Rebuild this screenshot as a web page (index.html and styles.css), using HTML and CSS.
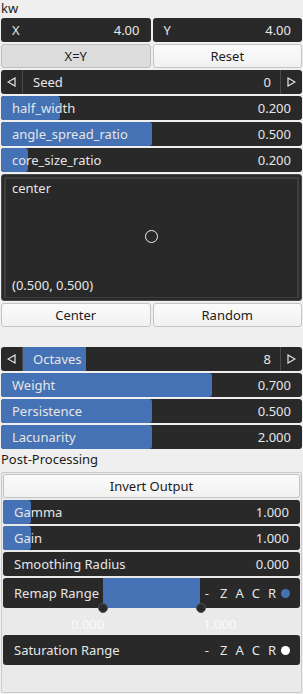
FILE: index.html
```html
<!DOCTYPE html>
<html lang="en">
  <head>
    <meta charset="UTF-8" />
    <meta name="viewport" content="width=device-width, initial-scale=1.0" />
    <title>kw</title>
    <link rel="stylesheet" href="styles.css">
  </head>
  <body>
    <div class="panel">
      <div class="heading heading-top">kw</div>

      <div class="pair">
        <div class="field"><span>X</span><span>4.00</span></div>
        <div class="field"><span>Y</span><span>4.00</span></div>
      </div>
      <div class="pair">
        <button class="btn btn-down">X=Y</button>
        <button class="btn">Reset</button>
      </div>

      <div class="stepper">
        <span class="step">
          <svg width="9" height="10" viewBox="0 0 9 10"><polygon points="8,1 8,9 1,5" /></svg>
        </span>
        <div class="step-body"><span>Seed</span><span>0</span></div>
        <span class="step">
          <svg width="9" height="10" viewBox="0 0 9 10"><polygon points="1,1 1,9 8,5" /></svg>
        </span>
      </div>

      <div class="slider" style="--fill: 19.6%"><span>half_width</span><span>0.200</span></div>
      <div class="slider" style="--fill: 50%"><span>angle_spread_ratio</span><span>0.500</span></div>
      <div class="slider" style="--fill: 9%"><span>core_size_ratio</span><span>0.200</span></div>

      <div class="pad">
        <div class="pad-frame">
          <span class="pad-label">center</span>
          <span class="pad-point"></span>
          <span class="pad-label">(0.500, 0.500)</span>
        </div>
      </div>

      <div class="pair">
        <button class="btn">Center</button>
        <button class="btn">Random</button>
      </div>

      <div class="spacer"></div>

      <div class="stepper">
        <span class="step">
          <svg width="9" height="10" viewBox="0 0 9 10"><polygon points="8,1 8,9 1,5" /></svg>
        </span>
        <div class="step-body step-fill" style="--fill: 24.6%"><span>Octaves</span><span>8</span></div>
        <span class="step">
          <svg width="9" height="10" viewBox="0 0 9 10"><polygon points="1,1 1,9 8,5" /></svg>
        </span>
      </div>

      <div class="slider" style="--fill: 70.1%"><span>Weight</span><span>0.700</span></div>
      <div class="slider" style="--fill: 50%"><span>Persistence</span><span>0.500</span></div>
      <div class="slider" style="--fill: 50%"><span>Lacunarity</span><span>2.000</span></div>

      <div class="heading">Post-Processing</div>

      <div class="group">
        <button class="btn">Invert Output</button>
        <div class="slider" style="--fill: 9.5%"><span>Gamma</span><span>1.000</span></div>
        <div class="slider" style="--fill: 9.5%"><span>Gain</span><span>1.000</span></div>
        <div class="slider"><span>Smoothing Radius</span><span>0.000</span></div>

        <div class="range">
          <span>Remap Range</span>
          <div class="range-sel">
            <i class="knob knob-left"></i>
            <i class="knob knob-right"></i>
          </div>
          <span class="flags"><span class="dash">-</span><span>Z</span><span>A</span><span>C</span><span>R</span><i class="dot dot-on"></i></span>
        </div>
        <div class="ticks"><span>0.000</span><span>1.000</span></div>

        <div class="range">
          <span>Saturation Range</span>
          <span class="flags"><span class="dash">-</span><span>Z</span><span>A</span><span>C</span><span>R</span><i class="dot"></i></span>
        </div>
      </div>
    </div>
  </body>
</html>
```

FILE: styles.css
```css
:root {
  --page-color: #efefef;
  --dark-color: #292929;
  --blue-color: #4571b5;
  --text-light: #e6e6e6;
  --text-dark: #1c1c1c;
}

body {
  margin: 0;
  background-color: var(--page-color);
  font-family: "Noto Sans", "Open Sans", sans-serif;
  font-size: 13px;
  color: var(--text-dark);
}

.panel {
  display: flex;
  flex-direction: column;
  gap: 2px;
  padding: 0 1px;
}

.heading {
  height: 18px;
  line-height: 16px;
}

.heading-top {
  height: 16px;
  line-height: 16px;
}

.pair {
  display: grid;
  grid-template-columns: 1fr 1fr;
  gap: 2px;
}

.field,
.slider {
  position: relative;
  height: 24px;
  padding: 0 11px;
  display: flex;
  justify-content: space-between;
  align-items: center;
  background-color: var(--dark-color);
  color: var(--text-light);
  border-radius: 3px;
  overflow: hidden;
}

.slider span,
.step-body span {
  position: relative;
}

.slider::before,
.step-fill::before {
  content: "";
  position: absolute;
  left: 0;
  top: 0;
  bottom: 0;
  width: var(--fill, 0);
  background-color: var(--blue-color);
  border-radius: 3px;
}

.btn {
  height: 24px;
  padding: 0;
  font-family: inherit;
  font-size: 13px;
  color: var(--text-dark);
  background: linear-gradient(#fbfbfb, #f1f1f1);
  border: 1px solid #c4c4c4;
  border-radius: 3px;
}

.btn-down {
  background: #dcdcdc;
  border-color: #bdbdbd;
}

.stepper {
  height: 24px;
  display: flex;
  background-color: var(--dark-color);
  color: var(--text-light);
  border-radius: 3px;
  overflow: hidden;
}

.step {
  width: 21px;
  display: flex;
  justify-content: center;
  align-items: center;
}

.step:first-child {
  border-right: 1px solid #4a4a4a;
}

.step:last-child {
  border-left: 1px solid #4a4a4a;
}

.step svg polygon {
  fill: none;
  stroke: #e6e6e6;
  stroke-width: 1.2;
}

.step-body {
  position: relative;
  flex: 1;
  display: flex;
  justify-content: space-between;
  align-items: center;
  padding: 0 9px 0 10px;
}

.step-fill::before {
  border-radius: 0;
}

.pad {
  height: 127px;
  padding: 2px;
  background-color: var(--dark-color);
  border: 1px solid #4c4c4c;
  border-radius: 3px;
  box-sizing: border-box;
}

.pad-frame {
  height: 100%;
  box-sizing: border-box;
  border: 2px solid #3e3e3e;
  border-bottom-width: 1px;
  padding: 0 6px 3px;
  display: flex;
  flex-direction: column;
  justify-content: space-between;
  color: var(--text-light);
}

.pad-point {
  align-self: center;
  width: 11px;
  height: 11px;
  border: 1.5px solid #f2f2f2;
  border-radius: 50%;
}

.spacer {
  height: 16px;
}

.group {
  margin-top: 1px;
  display: flex;
  flex-direction: column;
  gap: 2px;
  padding: 1px 1px 27px;
  background-color: #eaeaea;
  border: 1px solid #cbcbcb;
  border-radius: 2px;
}

.range {
  position: relative;
  height: 30px;
  padding: 0 10px 0 11px;
  display: flex;
  justify-content: space-between;
  align-items: center;
  background-color: var(--dark-color);
  color: var(--text-light);
  border-radius: 3px;
}

.range-sel {
  position: absolute;
  left: 100px;
  top: 0;
  bottom: 0;
  width: 97px;
  background-color: var(--blue-color);
}

.knob {
  position: absolute;
  bottom: -5px;
  width: 10px;
  height: 10px;
  background-color: var(--dark-color);
  border: 1px solid #555555;
  border-radius: 50%;
  box-sizing: border-box;
}

.knob-left {
  left: -5px;
}

.knob-right {
  right: -6px;
}

.flags {
  display: flex;
  align-items: center;
  gap: 8px;
}

.dash {
  margin-right: 3px;
}

.dot {
  margin-left: -3px;
  width: 9px;
  height: 9px;
  border-radius: 50%;
  background-color: #ffffff;
}

.dot-on {
  background-color: var(--blue-color);
}

.ticks {
  height: 23px;
  display: flex;
  align-items: flex-end;
  gap: 99px;
  padding-left: 68px;
  color: #fafafa;
  line-height: 17px;
}
```
